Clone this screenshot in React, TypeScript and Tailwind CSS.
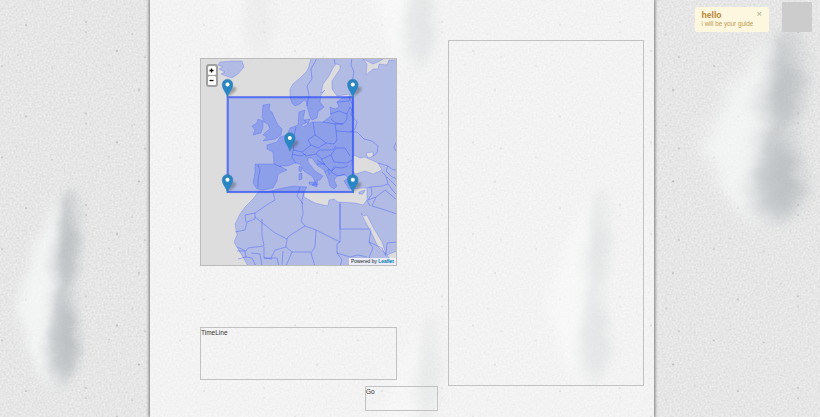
import React from "react";

const land =
  "M311 58L309 66L307 71L300 78L293 84L290 89L290 97L292 103L295 106L300 104L304 100L306 101L307 106L310 117L312 120L317 118L318 112L324 107L320 102L321 95L325 90L321 93L323 84L329 76L333 68L336 64L340 65L340 69L332 81L332 89L337 96L350 94L349 97L342 98L337 102L339 107L335 109L330 107L331 116L323 122L312 122L303 127L301 125L306 123L303 119L305 110L299 112L298 125L290 128L287 135L280 137L277 142L267 145L267 149L273 152L274 164L255 164L255 172L253 183L257 189L263 190L273 188L277 181L278 174L287 170L280 166L288 166L295 163L300 164L304 171L313 177L315 182L312 185L318 185L317 180L320 180L323 176L315 171L308 162L308 158L312 158L317 165L324 170L328 179L330 186L334 189L337 186L334 180L337 176L345 175L348 178L344 181L349 189L363 188L367 188L367 200L363 205L355 203L338 202L334 199L329 200L328 206L315 203L304 197L304 192L307 187L293 186L278 189L267 192L259 191L253 199L245 207L240 214L235 224L237 235L234 242L238 249L243 257L248 266L397 266L397 58Z" +
  "M352 160L354 155L360 158L365 157L378 163L382 170L373 174L365 171L356 174L351 170Z" +
  "M366 153L373 152L373 156L368 158Z" +
  "M361 213L364 216L367 215L373 227L382 242L386 254L378 247L372 234L365 221Z" +
  "M387 255L397 251L397 262L391 260Z" +
  "M363 59L367 64L366 75L373 69L378 69L379 64L387 65L389 60L397 60L397 58L385 58L378 62L373 64Z";

const islands = [
  "M220 62L232 61L242 61L244 67L238 74L232 78L226 76L221 74L225 72L219 69L223 67L218 65Z",
  "M263 105L270 104L269 110L272 112L275 119L278 125L282 129L281 135L275 139L263 141L267 137L263 135L267 131L270 129L268 124L264 122L262 117Z",
  "M258 119L263 121L263 127L261 133L253 135L255 130L252 126L257 123Z",
  "M299 166L302 168L301 172L299 171Z",
  "M299 174L302 173L302 179L299 180Z",
  "M309 182L316 182L317 187L309 184Z",
  "M304 120L310 119L308 124Z",
  "M359 192L365 190L363 194L359 194Z",
];

const borders = [
  "M307 106L309 95L307 86L312 79L311 69L317 58M335 64L334 58M352 58L351 65L354 72L352 82L355 88L351 94",
  "M337 102L349 101L350 97M330 114L339 111L347 114L350 107M331 119L336 123L343 124L347 119L347 114M350 99L353 106L351 115L357 122L355 129L350 132M313 122L315 135L321 139L326 143L334 144L337 140L336 131L335 124L323 122M335 124L343 124",
  "M336 131L350 132L357 132L364 139L372 141L378 146L377 153L373 156M350 107L354 113",
  "M315 135L308 140L311 145L318 148L326 143M311 145L302 152L306 156L316 154L319 150L333 150L336 146M316 154L322 159L331 155L336 148L345 148L350 156M302 152L293 150L292 158L296 163M296 127L294 136L292 142L294 150M292 154L300 156L306 154M287 135L293 142M321 159L325 165L331 171L334 167L342 168L348 166M325 165L317 160M331 155L334 162L347 163L352 160M325 172L329 169L329 175M335 168L331 172L338 176L345 174M317 164L325 164",
  "M258 165L260 170L258 180L258 187M274 164L281 167",
  "M273 192L275 200L268 204L255 213L255 219L247 222L245 230L235 232M255 217L275 233L287 239L289 236L305 226M255 213L245 215L246 222M262 219L262 235L264 246L248 248L246 251L237 247M287 239L286 247L275 250L271 258L264 258L264 247M304 192L302 201L303 214L301 221L305 226L316 230L340 242L340 202M303 204L297 196L300 187M340 204L340 229L371 229M316 230L315 247L311 253L315 266M340 242L337 244L337 253L342 260L340 266M286 247L292 252L311 252M292 252L286 266M237 251L245 251L246 257L238 259M246 257L252 258L256 266M251 253L260 254L262 266M271 258L277 258L279 266M264 258L272 259M283 251L282 266M371 230L369 242L373 248L369 257L376 264M369 242L382 248L386 256M386 255L387 243L397 242M337 253L350 257L358 255L367 257",
  "M367 188L371 187L382 186L388 184L386 176L382 172M378 163L388 166L393 170L397 170M388 166L386 171L392 177L397 179M388 184L394 192L397 195M371 187L372 194L368 200L376 197L385 190L397 200M376 197L372 206L382 209L397 214M367 200L370 206",
  "M397 141L394 147L396 151M387 177L397 187M353 183L350 177L347 180",
];

function Pin({ x, y }: { x: number; y: number }) {
  return (
    <g transform={`translate(${x} ${y})`}>
      <path d="M0 0L3-9Q8-11 9-8Q8-4 0 0Z" fill="#444" opacity=".4" filter="url(#soft)" />
      <path d="M0 1.2C-1-4-5.3-7-5.3-12A5.3 5.3 0 0 1 5.3-12C5.3-7 1-4 0 1.2Z" fill="url(#pin)" stroke="#2f7fb4" strokeWidth=".5" />
      <circle cy="-12" r="2" fill="white" />
    </g>
  );
}

function LeafletMap() {
  return (
    <section className="relative h-[208px] w-[197px] overflow-hidden border border-[#bbb] bg-[#ddd]">
      <svg className="block h-[206px] w-[195px]" viewBox="201 59 195 206">
        <defs>
          <linearGradient id="pin" x1="0" y1="0" x2="0" y2="1">
            <stop stopColor="#2e84bb" />
            <stop offset="1" stopColor="#2588cf" />
          </linearGradient>
          <filter id="soft" x="-50%" y="-50%" width="200%" height="200%">
            <feGaussianBlur stdDeviation="1.1" />
          </filter>
        </defs>
        <g fill="#0033ff" fillOpacity=".195" stroke="#2945ff" strokeOpacity=".25" strokeWidth=".9" strokeLinejoin="round">
          <path d={land} fillRule="evenodd" />
          {islands.map((d) => <path key={d} d={d} />)}
        </g>
        <g fill="none" stroke="#3550ff" strokeOpacity=".42" strokeWidth=".9" strokeLinejoin="round">
          {borders.map((d) => <path key={d} d={d} />)}
        </g>
        <rect x="227.7" y="97.2" width="125.3" height="94.8" fill="#0033ff" fillOpacity=".2" stroke="#2f50f5" strokeOpacity=".72" strokeWidth="2.1" />
        <Pin x={227.5} y={96.5} />
        <Pin x={352.8} y={96.5} />
        <Pin x={289.8} y={150} />
        <Pin x={227.5} y={191.7} />
        <Pin x={352.8} y={191.7} />
      </svg>
      <div className="absolute left-[4.5px] top-[4.5px] flex h-[23.5px] w-[12.5px] flex-col justify-between rounded-[3px] bg-[#a0a0a0] p-[2px]">
        <button className="flex h-[9px] items-center justify-center rounded-[1.5px] bg-white" aria-label="Zoom in">
          <svg className="h-[5px] w-[5px]" viewBox="0 0 5 5" stroke="#111" strokeWidth="1.3"><path d="M.5 2.5H4.5M2.5 .5V4.5" /></svg>
        </button>
        <button className="flex h-[9px] items-center justify-center rounded-[1.5px] bg-white" aria-label="Zoom out">
          <svg className="h-[5px] w-[5px]" viewBox="0 0 5 5" stroke="#111" strokeWidth="1.3"><path d="M.5 2.5H4.5" /></svg>
        </button>
      </div>
      <div className="absolute bottom-0 right-0 flex h-[7px] w-[47px] items-center justify-center whitespace-nowrap bg-white/75 font-['Liberation_Sans',Arial,sans-serif] text-[4.9px] text-[#222]">
        Powered by&nbsp;<span className="font-bold text-[#0078a8]">Leaflet</span>
      </div>
    </section>
  );
}

function Cloud({ x, y, scale = 1, opacity = 1 }: { x: number; y: number; scale?: number; opacity?: number }) {
  return (
    <g transform={`translate(${x} ${y}) scale(${scale} 1)`} opacity={opacity} filter="url(#cloud)">
      <path d="M-2-95Q-24-55-30-30Q-48 5-42 30Q-34 70-10 94L0 94L0-95Z" fill="#f8f9f9" opacity=".7" />
      <path d="M0-90L15-102L19-70L19-38L12-5L15 30L19 55L13 82L0 97L-12 75L-13 40L-8 10L-8-30Z" fill="#b4b9bc" opacity=".6" />
      <path d="M3-60L15-64L15-34L5-12L-3-8L1-35ZM-3 18L8 16L16 50L12 74L0 84L-6 55Z" fill="#9ba2a6" opacity=".26" />
    </g>
  );
}

function ConcreteWall() {
  return (
    <svg className="pointer-events-none absolute inset-0 -z-10 h-full w-full" viewBox="0 0 820 417">
      <defs>
        <filter id="cloud" x="-80%" y="-20%" width="260%" height="140%">
          <feTurbulence type="fractalNoise" baseFrequency=".04" numOctaves="3" seed="4" result="wisps" />
          <feGaussianBlur in="SourceGraphic" stdDeviation="6" result="blurred" />
          <feDisplacementMap in="blurred" in2="wisps" scale="11" xChannelSelector="R" yChannelSelector="G" />
        </filter>
        <filter id="plaster" x="0" y="0" width="100%" height="100%" colorInterpolationFilters="sRGB">
          <feTurbulence type="fractalNoise" baseFrequency=".5" numOctaves="3" seed="9" />
          <feColorMatrix type="matrix" values=".12 0 0 0 .842 .12 0 0 0 .842 .12 0 0 0 .842 0 0 0 0 1" />
        </filter>
        <pattern id="flecks" width="178" height="91.5" patternUnits="userSpaceOnUse">
          <g fill="#888" opacity=".6">
            <circle cx="26" cy="25" r=".8" /><circle cx="86" cy="22" r=".8" />
            <circle cx="86" cy="32" r=".7" /><circle cx="117" cy="51" r=".9" />
            <circle cx="109" cy="65" r=".7" /><circle cx="145" cy="57" r=".8" />
            <circle cx="52" cy="68" r=".7" /><circle cx="2" cy="66" r=".8" />
            <circle cx="139" cy="90" r=".9" /><circle cx="18" cy="55" r=".5" />
            <circle cx="69" cy="9" r=".5" /><circle cx="132" cy="34" r=".6" />
            <circle cx="109" cy="71" r=".4" /><circle cx="119" cy="53" r=".4" />
            <circle cx="37" cy="82" r=".4" /><circle cx="161" cy="20" r=".5" />
          </g>
        </pattern>
      </defs>
      <rect width="820" height="417" filter="url(#plaster)" />
      <rect width="820" height="417" fill="url(#flecks)" />
      <Cloud x={61} y={290} />
      <Cloud x={774} y={130} scale={1.6} />
      <Cloud x={592} y={290} opacity={0.7} />
      <Cloud x={417} y={-25} opacity={0.7} />
      <Cloud x={422} y={415} opacity={0.5} />
      <Cloud x={255} y={-32} opacity={0.3} />
    </svg>
  );
}

export default function App() {
  return (
    <div className="relative isolate flex h-[417px] w-[820px] items-start overflow-hidden bg-[#e7e7e7] font-['Liberation_Sans',Arial,sans-serif]">
      <ConcreteWall />
      <main className="ml-[150px] flex h-full w-[504px] shrink-0 items-start bg-white/50 pl-[50px] shadow-[0_0_3px_1px_#777]">
        <div className="flex w-[238px] flex-col pt-[58px]">
          <LeafletMap />
          <section className="mt-[61px] h-[53px] w-[197px] border border-[#c2c2c2] text-[6.5px] leading-[9px] text-[#333]">TimeLine</section>
          <button className="mt-[6px] flex h-[25px] w-[73px] items-start self-end border border-[#c2c2c2] text-[6.5px] leading-[9px] text-[#333]">Go</button>
        </div>
        <section className="ml-[10px] mt-[40px] h-[346px] w-[196px] border border-[#c2c2c2]" />
      </main>
      <aside className="ml-[41px] flex items-start">
        <div className="mt-[7px] flex h-[25px] w-[74px] justify-between rounded-[2px] bg-[#fdf7df] pl-[6.5px] pr-[7px] text-[#c09853]">
          <div className="whitespace-nowrap pt-[3px]">
            <h1 className="text-[8.6px] font-bold leading-[10px] text-[#b98536]">hello</h1>
            <p className="w-[52px] text-[6.3px] leading-[8px]">i will be your guide</p>
          </div>
          <button className="-ml-2 mt-[3px] h-2 text-[9.5px] leading-[8px] text-[#aaa58f]">×</button>
        </div>
        <div className="ml-[13px] mt-[2px] h-[30px] w-[30px] rounded-[1px] bg-[#ccc]" />
      </aside>
    </div>
  );
}
